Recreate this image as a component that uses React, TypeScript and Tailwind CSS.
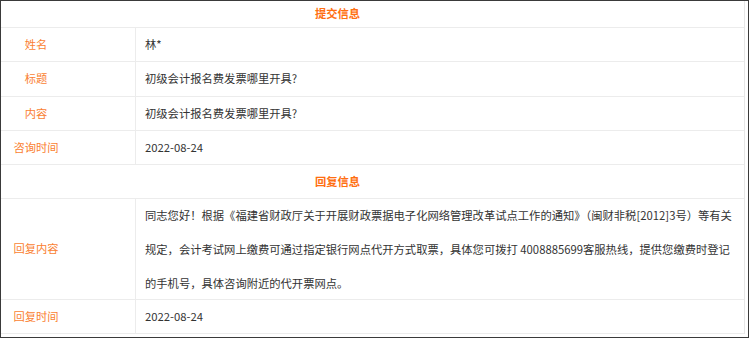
import React from "react";

const rows = [
  { label: "姓名", value: "林*", h: "h-[34px]" },
  { label: "标题", value: "初级会计报名费发票哪里开具?", h: "h-[35px]" },
  { label: "内容", value: "初级会计报名费发票哪里开具?", h: "h-[34px]" },
  { label: "咨询时间", value: "2022-08-24", h: "h-[34px]" },
];

const replyLines = [
  "同志您好！根据《福建省财政厅关于开展财政票据电子化网络管理改革试点工作的通知》（闽财非税[2012]3号）等有关",
  "规定，会计考试网上缴费可通过指定银行网点代开方式取票，具体您可拨打 4008885699客服热线，提供您缴费时登记",
  "的手机号，具体咨询附近的代开票网点。",
];

function Row({ label, h, children }: { label: string; h: string; children: React.ReactNode }) {
  return (
    <div className={`flex ${h} border-b border-[#ececec]`}>
      <div className="w-[135px] shrink-0 border-r border-[#ececec] flex items-center">
        <span className="w-[70px] text-center text-[#fa7f32]">{label}</span>
      </div>
      <div className="flex-1 flex items-center pl-[9px] text-[#333]">{children}</div>
    </div>
  );
}

function Header({ title, h }: { title: string; h: string }) {
  return (
    <div className={`${h} border-b border-[#ececec] flex items-center justify-center pr-[70px]`}>
      <span className="font-bold text-[#ff6f12]">{title}</span>
    </div>
  );
}

export default function App() {
  return (
    <div
      className="w-[749px] h-[338px] bg-white border border-[#3a3a3a] pr-[3px] pb-[3px] text-[11.3px] leading-none"
      style={{ fontFamily: '"Noto Sans CJK SC", "Noto Sans", sans-serif' }}
    >
      <div className="border-r border-[#e6e6e6]">
        <Header title="提交信息" h="h-[27px]" />
        {rows.map((r) => (
          <Row key={r.label} label={r.label} h={r.h}>
            {r.value}
          </Row>
        ))}
        <Header title="回复信息" h="h-[34px]" />
        <Row label="回复内容" h="h-[101px]">
          <div className="leading-[34px]">
            {replyLines.map((line, i) => (
              <div key={i} className="whitespace-nowrap">
                {line}
              </div>
            ))}
          </div>
        </Row>
        <Row label="回复时间" h="h-[34px]">
          2022-08-24
        </Row>
      </div>
    </div>
  );
}
